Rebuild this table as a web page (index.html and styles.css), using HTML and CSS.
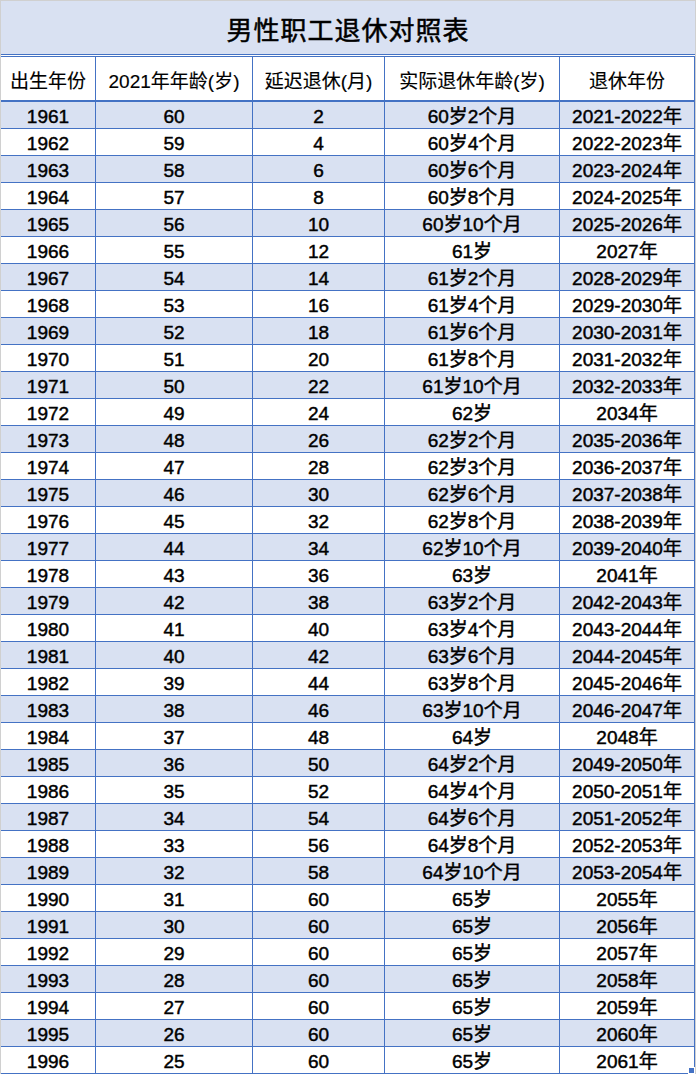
FILE: index.html
```html
<!DOCTYPE html>
<html lang="zh-CN">
<head>
<meta charset="utf-8">
<title>男性职工退休对照表</title>
<link rel="stylesheet" href="styles.css">
</head>
<body>
<div class="sheet">
  <div class="title">男性职工退休对照表</div>
  <table class="grid">
    <colgroup>
      <col class="c1"><col class="c2"><col class="c3"><col class="c4"><col class="c5">
    </colgroup>
    <thead>
      <tr><th>出生年份</th><th>2021年年龄(岁)</th><th>延迟退休(月)</th><th>实际退休年龄(岁)</th><th>退休年份</th></tr>
    </thead>
    <tbody>
      <tr><td>1961</td><td>60</td><td>2</td><td>60岁2个月</td><td>2021-2022年</td></tr>
      <tr><td>1962</td><td>59</td><td>4</td><td>60岁4个月</td><td>2022-2023年</td></tr>
      <tr><td>1963</td><td>58</td><td>6</td><td>60岁6个月</td><td>2023-2024年</td></tr>
      <tr><td>1964</td><td>57</td><td>8</td><td>60岁8个月</td><td>2024-2025年</td></tr>
      <tr><td>1965</td><td>56</td><td>10</td><td>60岁10个月</td><td>2025-2026年</td></tr>
      <tr><td>1966</td><td>55</td><td>12</td><td>61岁</td><td>2027年</td></tr>
      <tr><td>1967</td><td>54</td><td>14</td><td>61岁2个月</td><td>2028-2029年</td></tr>
      <tr><td>1968</td><td>53</td><td>16</td><td>61岁4个月</td><td>2029-2030年</td></tr>
      <tr><td>1969</td><td>52</td><td>18</td><td>61岁6个月</td><td>2030-2031年</td></tr>
      <tr><td>1970</td><td>51</td><td>20</td><td>61岁8个月</td><td>2031-2032年</td></tr>
      <tr><td>1971</td><td>50</td><td>22</td><td>61岁10个月</td><td>2032-2033年</td></tr>
      <tr><td>1972</td><td>49</td><td>24</td><td>62岁</td><td>2034年</td></tr>
      <tr><td>1973</td><td>48</td><td>26</td><td>62岁2个月</td><td>2035-2036年</td></tr>
      <tr><td>1974</td><td>47</td><td>28</td><td>62岁3个月</td><td>2036-2037年</td></tr>
      <tr><td>1975</td><td>46</td><td>30</td><td>62岁6个月</td><td>2037-2038年</td></tr>
      <tr><td>1976</td><td>45</td><td>32</td><td>62岁8个月</td><td>2038-2039年</td></tr>
      <tr><td>1977</td><td>44</td><td>34</td><td>62岁10个月</td><td>2039-2040年</td></tr>
      <tr><td>1978</td><td>43</td><td>36</td><td>63岁</td><td>2041年</td></tr>
      <tr><td>1979</td><td>42</td><td>38</td><td>63岁2个月</td><td>2042-2043年</td></tr>
      <tr><td>1980</td><td>41</td><td>40</td><td>63岁4个月</td><td>2043-2044年</td></tr>
      <tr><td>1981</td><td>40</td><td>42</td><td>63岁6个月</td><td>2044-2045年</td></tr>
      <tr><td>1982</td><td>39</td><td>44</td><td>63岁8个月</td><td>2045-2046年</td></tr>
      <tr><td>1983</td><td>38</td><td>46</td><td>63岁10个月</td><td>2046-2047年</td></tr>
      <tr><td>1984</td><td>37</td><td>48</td><td>64岁</td><td>2048年</td></tr>
      <tr><td>1985</td><td>36</td><td>50</td><td>64岁2个月</td><td>2049-2050年</td></tr>
      <tr><td>1986</td><td>35</td><td>52</td><td>64岁4个月</td><td>2050-2051年</td></tr>
      <tr><td>1987</td><td>34</td><td>54</td><td>64岁6个月</td><td>2051-2052年</td></tr>
      <tr><td>1988</td><td>33</td><td>56</td><td>64岁8个月</td><td>2052-2053年</td></tr>
      <tr><td>1989</td><td>32</td><td>58</td><td>64岁10个月</td><td>2053-2054年</td></tr>
      <tr><td>1990</td><td>31</td><td>60</td><td>65岁</td><td>2055年</td></tr>
      <tr><td>1991</td><td>30</td><td>60</td><td>65岁</td><td>2056年</td></tr>
      <tr><td>1992</td><td>29</td><td>60</td><td>65岁</td><td>2057年</td></tr>
      <tr><td>1993</td><td>28</td><td>60</td><td>65岁</td><td>2058年</td></tr>
      <tr><td>1994</td><td>27</td><td>60</td><td>65岁</td><td>2059年</td></tr>
      <tr><td>1995</td><td>26</td><td>60</td><td>65岁</td><td>2060年</td></tr>
      <tr><td>1996</td><td>25</td><td>60</td><td>65岁</td><td>2061年</td></tr>
    </tbody>
  </table>
  <span class="handle"></span>
</div>
</body>
</html>
```

FILE: styles.css
```css
html, body {
  margin: 0;
  padding: 0;
}
body {
  background: #d0d0d0;
  width: 696px;
  height: 1074px;
  overflow: hidden;
  font-family: "Liberation Sans", "Noto Sans CJK SC", sans-serif;
  color: #000;
}
.sheet {
  position: relative;
  margin: 1px 1px 0 1px;
  width: 694px;
  background: #fff;
}
.title {
  box-sizing: border-box;
  height: 54px;
  margin-bottom: 1px;
  padding-top: 2px;
  background: #d9e1f2;
  border-bottom: 1px solid #4472c4;
  display: flex;
  align-items: center;
  justify-content: center;
  font-size: 26px;
  letter-spacing: 1px;
  -webkit-text-stroke: 0.5px #000;
}
.grid {
  width: 694px;
  table-layout: fixed;
  border-collapse: separate;
  border-spacing: 0;
  border-top: 1px solid #4472c4;
}
.c1 { width: 95px; }
.c2 { width: 157px; }
.c3 { width: 132px; }
.c4 { width: 175px; }
.c5 { width: 135px; }
.grid th, .grid td {
  padding: 0;
  text-align: center;
  border-right: 1px solid #4472c4;
  border-bottom: 1px solid #4472c4;
  white-space: nowrap;
  font-size: 19px;
}
.grid th {
  height: 42px;
  padding-top: 1px;
  font-weight: normal;
  border-bottom-width: 2px;
  background: #fff;
  -webkit-text-stroke: 0.15px #000;
}
.grid td {
  padding-top: 4px;
  line-height: 22px;
  font-weight: normal;
  -webkit-text-stroke: 0.45px #000;
}
.grid tbody tr:nth-child(odd) td {
  background: #d9e1f2;
}
.handle {
  position: absolute;
  right: 0;
  bottom: 0;
  width: 5px;
  height: 5px;
  background: #4472c4;
  border: 1px solid #fff;
}
```
